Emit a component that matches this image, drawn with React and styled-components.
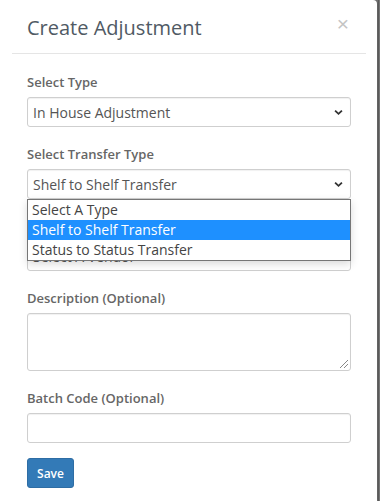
import React from "react";
import styled, { createGlobalStyle } from "styled-components";

const GlobalStyle = createGlobalStyle`
  html, body {
    margin: 0;
    padding: 0;
    height: 100%;
    background: #7b7b7b;
    overflow: hidden;
  }
  body {
    font-family: "Open Sans", "Liberation Sans", sans-serif;
  }
`;

function SelectBox({ value }) {
  return (
    <SelectWrap>
      <SelectValue>{value}</SelectValue>
      <Chevron viewBox="0 0 10 7">
        <path d="M1.2 1.3 L5 5 L8.8 1.3" fill="none" stroke="#333" strokeWidth="2" />
      </Chevron>
    </SelectWrap>
  );
}

export default function App() {
  const options = ["Select A Type", "Shelf to Shelf Transfer", "Status to Status Transfer"];

  return (
    <>
      <GlobalStyle />
      <Backdrop>
        <Modal>
          <Header>
            <Title>Create Adjustment</Title>
            <Close>×</Close>
          </Header>

          <Body>
            <Group>
              <Label>Select Type</Label>
              <SelectBox value="In House Adjustment" />
            </Group>

            <Group>
              <Label>Select Transfer Type</Label>
              <DropdownAnchor>
                <SelectBox value="Shelf to Shelf Transfer" />
                <OptionList>
                  {options.map((o, i) => (
                    <Option key={o} active={i === 1}>{o}</Option>
                  ))}
                </OptionList>
              </DropdownAnchor>
            </Group>

            <Group>
              <Label>Select Vendor</Label>
              <SelectBox value="Select A Vendor" />
            </Group>

            <Group>
              <Label>Description (Optional)</Label>
              <TextArea />
            </Group>

            <Group last>
              <Label>Batch Code (Optional)</Label>
              <Input />
            </Group>

            <SaveButton>Save</SaveButton>
          </Body>
        </Modal>
        <Edge />
      </Backdrop>
    </>
  );
}

const Backdrop = styled.div`
  display: flex;
  height: 501px;
`;

const Modal = styled.div`
  width: 377px;
  flex: 0 0 377px;
  background: #fff;
  border-top-right-radius: 4px;
  box-shadow: 1px 0 3px rgba(0, 0, 0, 0.3);
`;

const Edge = styled.div`
  width: 1px;
  margin-left: 1px;
  background: #5a5a5a;
`;

const Header = styled.div`
  display: flex;
  justify-content: space-between;
  align-items: flex-start;
  margin: 0 11px 0 12px;
  padding: 13px 17px 11px 15px;
  border-bottom: 1px solid #e5e5e5;
`;

const Title = styled.h4`
  margin: 0;
  font-size: 20px;
  font-weight: 400;
  line-height: 29px;
  color: #505a64;
`;

const Close = styled.span`
  font-family: "Liberation Sans", sans-serif;
  font-size: 21px;
  line-height: 21px;
  color: #c4c4c4;
`;

const Body = styled.div`
  padding: 18px 26px 0 27px;
`;

const Group = styled.div`
  margin-bottom: ${(p) => (p.last ? "15px" : "17px")};
`;

const Label = styled.div`
  font-size: 13px;
  font-weight: 600;
  line-height: 20px;
  color: #666;
  margin-bottom: 5px;
`;

const SelectWrap = styled.div`
  display: flex;
  align-items: center;
  justify-content: space-between;
  height: 30px;
  box-sizing: border-box;
  border: 1px solid #cfcfcf;
  border-radius: 3px;
  padding: 0 7px 0 5px;
  background: #fff;
  box-shadow: inset 0 1px 1px rgba(0, 0, 0, 0.06);
`;

const SelectValue = styled.span`
  font-size: 14px;
  color: #555;
`;

const Chevron = styled.svg`
  width: 9px;
  height: 7px;
`;

const DropdownAnchor = styled.div`
  position: relative;
`;

const OptionList = styled.div`
  position: absolute;
  left: 0;
  right: 0;
  top: 30px;
  z-index: 5;
  background: #fff;
  border: 1px solid #767676;
  box-shadow: 0 3px 8px rgba(0, 0, 0, 0.15);
`;

const Option = styled.div`
  height: 20px;
  line-height: 20px;
  padding: 0 4px;
  font-size: 14px;
  color: ${(p) => (p.active ? "#fff" : "#444")};
  background: ${(p) => (p.active ? "#1e90ff" : "#fff")};
`;

const TextArea = styled.div`
  height: 58px;
  box-sizing: border-box;
  border: 1px solid #cfcfcf;
  border-radius: 3px;
  position: relative;
  box-shadow: inset 0 1px 1px rgba(0, 0, 0, 0.06);

  &::after {
    content: "";
    position: absolute;
    right: 2px;
    bottom: 2px;
    width: 8px;
    height: 8px;
    background: linear-gradient(
      135deg,
      transparent 45%,
      #888 45%,
      #888 52%,
      transparent 52%,
      transparent 70%,
      #888 70%,
      #888 77%,
      transparent 77%
    );
  }
`;

const Input = styled.div`
  height: 30px;
  box-sizing: border-box;
  border: 1px solid #cfcfcf;
  border-radius: 3px;
  box-shadow: inset 0 1px 1px rgba(0, 0, 0, 0.06);
`;

const SaveButton = styled.button`
  width: 47px;
  height: 30px;
  padding: 0;
  border: 1px solid #2e6da4;
  border-radius: 3px;
  background: #337ab7;
  color: #fff;
  font-family: "Open Sans", "Liberation Sans", sans-serif;
  font-size: 12px;
  font-weight: 600;
`;
